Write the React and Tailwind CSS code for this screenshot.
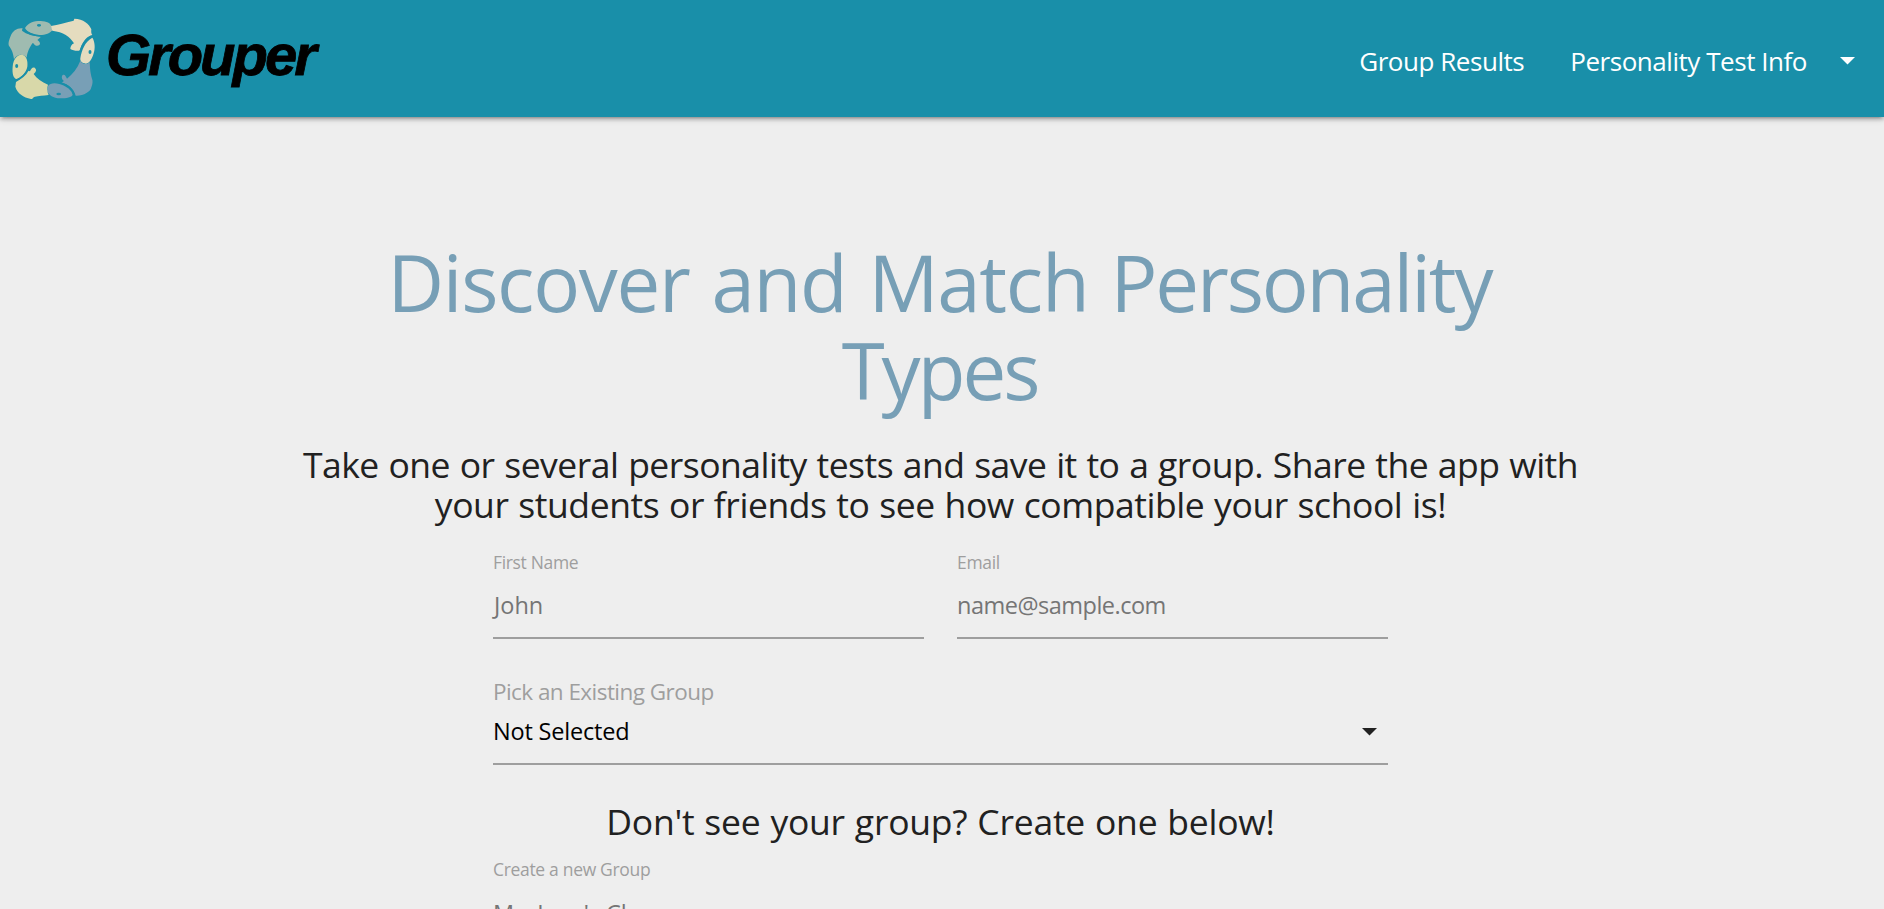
function FishLogo() {
  return (
    <svg viewBox="0 0 315 300" className="h-[100px] w-[105px] shrink-0" aria-hidden="true">
      <g fill="#9fbbb0">
        <path d="M68 55C52 53 38 62 32 78C26 92 23 105 29 110C38 125 40 132 42 148C50 132 70 130 80 143C82 125 90 108 99 98C103 105 110 110 117 106C122 102 121 96 112 90L123 80C100 78 80 73 66 62Z" />
        <path d="M75 54C85 38 100 33 122 33C140 34 152 39 155 50L158 60C150 70 135 76 115 75C95 73 82 66 75 54Z" />
      </g>
      <g fill="#e5dcbf">
        <path d="M153 48C175 45 195 38 221 32L223 26C250 27 268 42 274 58C273 66 274 72 277 75C262 78 250 92 243 111C240 116 242 120 238 122C227 123 218 121 211 117C211 110 214 104 222 100C210 80 190 66 157 62Z" />
        <path d="M277 83C285 95 286 115 281 130C276 148 268 160 258 161C245 160 240 153 241 145C245 120 255 95 277 83Z" />
      </g>
      <g fill="#789fb6">
        <path d="M241 152C232 175 218 192 201 206C197 199 195 192 188 195C183 202 186 209 192 213L184 218C204 222 222 236 227 257C250 258 272 246 274 232C278 222 279 212 276 206C270 185 270 172 269 156C262 165 247 163 241 152Z" />
        <path d="M144 228C150 220 162 218 178 222C198 228 215 240 218 254C215 262 200 265 180 265C160 265 145 255 142 243Z" />
      </g>
      <g fill="#d8d8a9">
        <path d="M48 216C62 208 76 195 84 182L90 184C92 177 98 170 104 173C110 178 110 184 101 192C110 205 125 217 144 224C141 232 141 245 146 255C130 257 115 258 105 260C98 261 100 267 93 267C70 262 52 250 46 230Z" />
        <path d="M38 170C40 145 55 132 68 135C80 138 84 155 82 170C78 188 65 202 50 207C40 205 36 190 38 170Z" />
      </g>
      <g fill="#198fa9">
        <ellipse cx="117" cy="46" rx="6" ry="4" />
        <ellipse cx="270" cy="126" rx="4.5" ry="6" />
        <ellipse cx="176" cy="252" rx="7" ry="4" />
        <ellipse cx="50" cy="168" rx="4.5" ry="6" />
      </g>
      <g fill="none" stroke="#198fa9" strokeWidth="5" strokeLinecap="round">
        <path d="M70 58C82 70 100 76 124 78" />
        <path d="M279 78C262 82 249 98 241 122" />
        <path d="M46 212C64 205 78 192 85 178" />
        <path d="M184 219C204 225 220 238 223 258" />
      </g>
    </svg>
  );
}

function Caret({ className }) {
  return (
    <svg viewBox="0 0 14 7" className={className} fill="currentColor" aria-hidden="true">
      <path d="M0 0h14L7 7z" />
    </svg>
  );
}

function Field({ label, labelClass, children, valueClass }) {
  return (
    <div className="flex min-w-0 flex-1 flex-col whitespace-nowrap">
      <div className={"h-5 text-[17.5px] leading-5 text-[#9e9e9e] " + labelClass}>{label}</div>
      <div className={"mt-[18px] h-[49px] border-b-2 border-[#9e9e9e] text-[23.5px] leading-[30px] text-[#757575] " + valueClass}>
        {children}
      </div>
    </div>
  );
}

export default function App() {
  return (
    <div className="flex h-[909px] flex-col overflow-hidden bg-[#eeeeee] font-['Open_Sans',sans-serif] text-[#212121]">
      <nav className="flex h-[117px] shrink-0 items-start justify-between bg-[#198fa9] pr-[29px] shadow-[0_3px_3px_0_rgba(0,0,0,0.14),0_4.5px_1.5px_-3px_rgba(0,0,0,0.12),0_1.5px_7.5px_0_rgba(0,0,0,0.2)]">
        <a className="flex pt-2.5">
          <FishLogo />
          <span className="ml-px mt-[12px] font-['Liberation_Sans',sans-serif] text-[58px] font-bold italic leading-[66px] tracking-[-3px] text-black [-webkit-text-stroke:0.8px_black]">
            Grouper
          </span>
        </a>
        <div className="flex items-start pt-[41px] text-[26px] leading-10 tracking-[-0.46px] text-white">
          <a>Group Results</a>
          <a className="ml-[46px]">Personality Test Info</a>
          <Caret className="ml-[33px] mt-4 h-[7.5px] w-[15px]" />
        </div>
      </nav>

      <main className="flex flex-col items-center pr-[3px] pt-[121px]">
        <h1 className="pr-[2px] text-center text-[78px] leading-[88px] tracking-[-1.3px] text-[#779fb6] [word-spacing:3px]">
          Discover and Match <span className="tracking-[-2.1px]">Personality</span>
          <br />
          <span className="tracking-[-3px]">Types</span>
        </h1>
        <p className="mt-[30px] text-center text-[35.5px] leading-10 tracking-[-0.51px] [word-spacing:1px]">
          Take one or several personality tests and save it to a group. Share the app with
          <br />
          <span className="tracking-[-0.43px]">your students or friends to see how compatible your school is!</span>
        </p>

        <form className="mt-7 flex w-[895px] flex-col">
          <div className="flex gap-[33px]">
            <Field label="First Name" labelClass="tracking-[-0.33px]" valueClass="pl-px">
              John
            </Field>
            <Field label="Email" labelClass="tracking-[-0.3px]" valueClass="tracking-[-0.5px]">
              name@sample.com
            </Field>
          </div>

          <div className="mt-[38px] h-[30px] text-[22.5px] leading-[30px] tracking-[-0.55px] text-[#9e9e9e]">
            Pick an Existing Group
          </div>
          <div className="mt-[9px] flex h-[49px] justify-between border-b-2 border-[#9e9e9e] pr-[11px] text-[23.5px] leading-[30px] tracking-[-0.2px] text-black">
            <span>Not Selected</span>
            <Caret className="mt-3 h-[7.5px] w-[15px] text-[#212121]" />
          </div>

          <h2 className="mt-9 text-center text-[35.5px] leading-10 tracking-[-0.24px] [word-spacing:1px]">
            Don't see your group? Create one below!
          </h2>

          <div className="mt-[18px] flex">
            <Field label="Create a new Group" labelClass="tracking-[-0.32px]" valueClass="pt-px tracking-[-0.1px]">
              Ms. Jane's Class
            </Field>
          </div>
        </form>
      </main>
    </div>
  );
}
